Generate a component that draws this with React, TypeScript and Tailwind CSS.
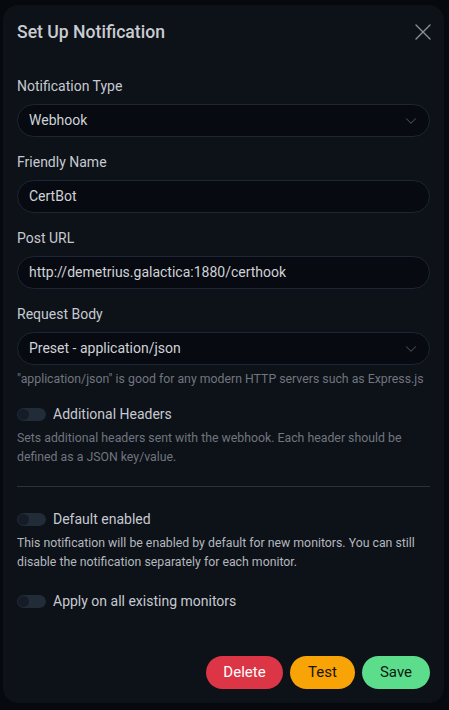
import React from "react";
import { X, ChevronDown } from "lucide-react";

const font = { fontFamily: "Roboto, 'Noto Sans', sans-serif" };

function Toggle({ label }: { label: string }) {
  return (
    <div className="flex items-center h-[21px]">
      <span className="relative w-[29px] h-[13px] rounded-full bg-[#222b38] mr-[7px]">
        <span className="absolute left-[1px] top-[1px] w-[11px] h-[11px] rounded-full bg-[#161c27]" />
      </span>
      <span className="text-[14px] text-[#c6cad0]">{label}</span>
    </div>
  );
}

function Field({ label, value, select }: { label: string; value: string; select?: boolean }) {
  return (
    <div>
      <div className="text-[14px] leading-[21px] text-[#c6cad0] mb-[7px]">{label}</div>
      <div className="flex items-center justify-between h-[33px] rounded-full border border-[#1d2636] bg-[#070a10] pl-[11px] pr-[9px]">
        <span className="text-[14px] text-[#cfd2d7]">{value}</span>
        {select && <ChevronDown className="w-[18px] h-[18px] text-[#454d5b]" strokeWidth={1.4} />}
      </div>
    </div>
  );
}

export default function App() {
  return (
    <div className="w-[449px] h-[710px] bg-[#06090d] pl-[3px] pr-[5px] pt-[5px]" style={font}>
      <div className="h-[698px] rounded-[15px] bg-[#0d1118] px-[14px] flex flex-col">
        {/* header */}
        <div className="flex items-center justify-between pt-[16px] h-[38px]">
          <h1 className="text-[17.6px] leading-[22px] font-medium text-[#c9ccd1]">Set Up Notification</h1>
          <X className="w-[28px] h-[28px] -my-[3px] text-[#8a8f96] -mr-[7px]" strokeWidth={1.2} />
        </div>

        <div className="mt-[33px] flex flex-col gap-[15px]">
          <Field label="Notification Type" value="Webhook" select />
          <Field label="Friendly Name" value="CertBot" />
          <Field label="Post URL" value="http://demetrius.galactica:1880/certhook" />
          <div>
            <Field label="Request Body" value="Preset - application/json" select />
            <div className="mt-[5px] text-[12.3px] leading-[18px] text-[#70767f] whitespace-nowrap">
              "application/json" is good for any modern HTTP servers such as Express.js
            </div>
          </div>
        </div>

        <div className="mt-[16px]">
          <Toggle label="Additional Headers" />
          <p className="mt-[4px] text-[12.3px] leading-[18.6px] text-[#70767f]">
            Sets additional headers sent with the webhook. Each header should be defined as a JSON key/value.
          </p>
        </div>

        <hr className="mt-[20px] border-t border-[#2c323b]" />

        <div className="mt-[22px]">
          <Toggle label="Default enabled" />
          <p className="mt-[4px] text-[12.3px] leading-[18.4px] text-[#b4b8be]">
            This notification will be enabled by default for new monitors. You can still disable the notification separately for each monitor.
          </p>
        </div>

        <div className="mt-[20px]">
          <Toggle label="Apply on all existing monitors" />
        </div>

        <div className="mt-auto mb-[14px] flex justify-end gap-[7px]">
          <button className="h-[33px] w-[77px] rounded-full bg-[#dc3545] text-[15px] text-white">Delete</button>
          <button className="h-[33px] w-[65px] rounded-full bg-[#f8a306] text-[15px] text-[#1a1205]">Test</button>
          <button className="h-[33px] w-[68px] rounded-full bg-[#5cdd8b] text-[15px] text-[#0d1a12]">Save</button>
        </div>
      </div>
    </div>
  );
}
